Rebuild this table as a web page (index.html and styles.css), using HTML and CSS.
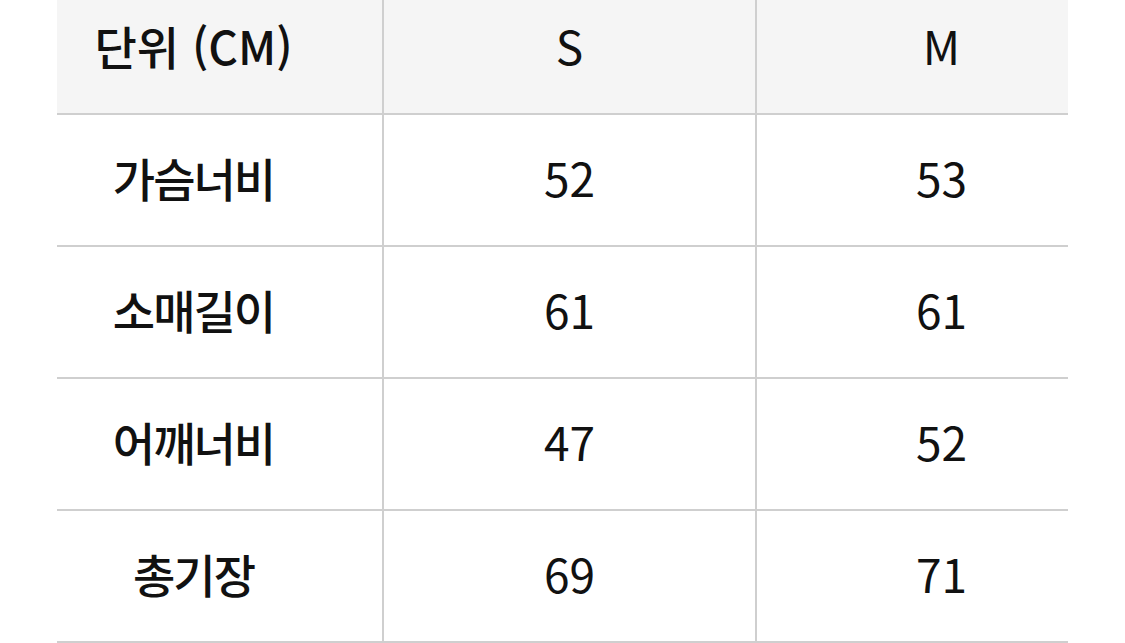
FILE: index.html
```html
<!DOCTYPE html>
<html lang="ko">
<head>
<meta charset="utf-8">
<link rel="stylesheet" href="styles.css">
</head>
<body>
<div class="size-table">
  <div class="cell head label">단위 (CM)</div>
  <div class="cell head mid">S</div>
  <div class="cell head last">M</div>

  <div class="cell label">가슴너비</div>
  <div class="cell mid num">52</div>
  <div class="cell last num">53</div>

  <div class="cell label">소매길이</div>
  <div class="cell mid num">61</div>
  <div class="cell last num">61</div>

  <div class="cell label">어깨너비</div>
  <div class="cell mid num">47</div>
  <div class="cell last num">52</div>

  <div class="cell label">총기장</div>
  <div class="cell mid num">69</div>
  <div class="cell last num">71</div>
</div>
</body>
</html>
```
FILE: styles.css
```css
html, body {
  margin: 0;
  padding: 0;
  background: #ffffff;
  overflow: hidden;
}
body {
  font-family: "Noto Sans CJK KR", "Noto Sans", sans-serif;
  color: #111111;
}
.size-table {
  margin-top: -17px;
  margin-left: 57px;
  width: 1011px;
  display: grid;
  grid-template-columns: 325px 373px 313px;
  grid-auto-rows: 132px;
}
.cell {
  display: flex;
  align-items: center;
  justify-content: center;
  padding-bottom: 6px;
  border-bottom: 2px solid #cfcfcf;
  font-size: 46px;
  font-weight: 400;
  line-height: 1;
}
.head {
  background: #f5f5f5;
}
.label {
  padding-right: 52px;
  font-weight: 500;
  letter-spacing: -2px;
}
.head.label {
  letter-spacing: 0;
  font-weight: 500;
}
.mid {
  border-left: 2px solid #cfcfcf;
}
.last {
  border-left: 2px solid #cfcfcf;
  padding-left: 58px;
}
```
